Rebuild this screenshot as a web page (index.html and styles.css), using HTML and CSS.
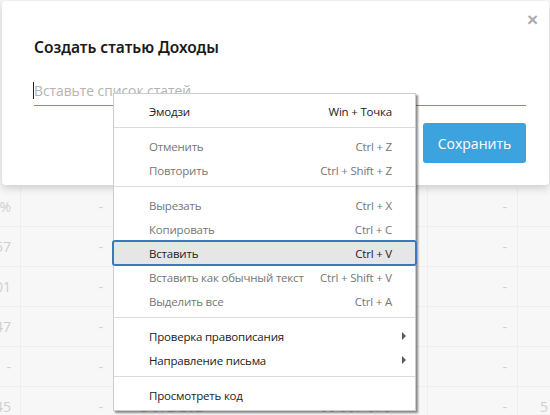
FILE: index.html
```html
<!DOCTYPE html>
<html lang="ru">
<head>
<meta charset="utf-8">
<title>Создать статью</title>
<link rel="stylesheet" href="styles.css">
</head>
<body>
<div class="page">
  <div class="table">
    <div class="row"><div class="c c1">%</div><div class="c c2">-</div><div class="c c3"></div><div class="c c4"></div><div class="c c5">-</div><div class="c c6"></div></div>
    <div class="row"><div class="c c1">57</div><div class="c c2">-</div><div class="c c3"></div><div class="c c4"></div><div class="c c5">-</div><div class="c c6"></div></div>
    <div class="row"><div class="c c1">01</div><div class="c c2">-</div><div class="c c3"></div><div class="c c4"></div><div class="c c5">-</div><div class="c c6"></div></div>
    <div class="row"><div class="c c1">47</div><div class="c c2">-</div><div class="c c3"></div><div class="c c4"></div><div class="c c5">-</div><div class="c c6"></div></div>
    <div class="row"><div class="c c1">-</div><div class="c c2">-</div><div class="c c3"></div><div class="c c4"></div><div class="c c5">-</div><div class="c c6"></div></div>
    <div class="row"><div class="c c1">45</div><div class="c c2">-</div><div class="c c3">0 072 202</div><div class="c c4">00 007 070</div><div class="c c5">-</div><div class="c c6">5</div></div>
  </div>
</div>

<div class="modal">
  <div class="close">×</div>
  <h2 class="title">Создать статью Доходы</h2>
  <div class="field"><span class="caret"></span><span class="placeholder">Вставьте список статей</span></div>
  <div class="actions"><button class="save">Сохранить</button></div>
</div>

<div class="menu">
  <div class="item on"><span>Эмодзи</span><span>Win + Точка</span></div>
  <div class="sep"></div>
  <div class="item"><span>Отменить</span><span>Ctrl + Z</span></div>
  <div class="item"><span>Повторить</span><span>Ctrl + Shift + Z</span></div>
  <div class="sep"></div>
  <div class="item"><span>Вырезать</span><span>Ctrl + X</span></div>
  <div class="item"><span>Копировать</span><span>Ctrl + C</span></div>
  <div class="item on active"><span>Вставить</span><span>Ctrl + V</span></div>
  <div class="item"><span>Вставить как обычный текст</span><span>Ctrl + Shift + V</span></div>
  <div class="item"><span>Выделить все</span><span>Ctrl + A</span></div>
  <div class="sep"></div>
  <div class="item on sub"><span>Проверка правописания</span><svg class="arrow" width="5" height="8" viewBox="0 0 5 8"><polygon points="0,0 4,4 0,8" fill="#5a5a5a"/></svg></div>
  <div class="item on sub"><span>Направление письма</span><svg class="arrow" width="5" height="8" viewBox="0 0 5 8"><polygon points="0,0 4,4 0,8" fill="#5a5a5a"/></svg></div>
  <div class="sep"></div>
  <div class="item on"><span>Просмотреть код</span></div>
</div>
</body>
</html>
```
FILE: styles.css
```css
* { box-sizing: border-box; }
html, body { margin: 0; padding: 0; }
body {
  width: 550px;
  height: 415px;
  overflow: hidden;
  position: relative;
  background: #f7f7f7;
  font-family: "Open Sans", "Noto Sans", sans-serif;
}
.page { padding-top: 187px; }
.table { display: flex; flex-direction: column; }
.row {
  display: flex;
  height: 40px;
  border-bottom: 1px solid #eeeeee;
  font-size: 14px;
  color: #cfcfcf;
}
.c {
  flex-shrink: 0;
  display: flex;
  align-items: center;
  justify-content: flex-end;
  padding-right: 10px;
  white-space: nowrap;
}
.c1 { width: 29px; margin-left: -8px; padding-right: 9px; border-right: 1px solid #eeeeee; }
.c2 { width: 92px; }
.c3 { width: 100px; color: #c8c8c8; }
.c4 { width: 214px; color: #c8c8c8; padding-right: 36px; }
.c5 { width: 91px; border-left: 1px solid #eeeeee; border-right: 1px solid #eeeeee; }
.c6 { width: 40px; }

.modal {
  position: absolute;
  left: 2px;
  top: 1px;
  width: 547px;
  height: 184px;
  background: #ffffff;
  border-radius: 4px;
  box-shadow: 0 3px 9px rgba(0, 0, 0, 0.18);
  padding: 36px 23px 0 32px;
  display: flex;
  flex-direction: column;
}
.close {
  position: absolute;
  top: 8px;
  right: 11px;
  font-family: "Liberation Sans", sans-serif;
  font-size: 19px;
  font-weight: bold;
  line-height: 22px;
  color: #acacac;
}
.title {
  margin: 0;
  font-family: "Noto Sans", sans-serif;
  font-weight: 600;
  font-size: 15.5px;
  line-height: 20px;
  color: #1a1a1a;
}
.field {
  margin-top: 18px;
  height: 31px;
  border-bottom: 1px solid #4a9fd6;
  display: flex;
  align-items: center;
}
.caret {
  width: 1px;
  height: 17px;
  background: #222;
  margin-left: -1px;
}
.placeholder {
  font-size: 13.8px;
  color: #b3b3b3;
}
.actions {
  margin-top: 17px;
  display: flex;
  justify-content: flex-end;
}
.save {
  width: 103px;
  height: 40px;
  border: none;
  border-radius: 3px;
  background: #3da3de;
  color: #ffffff;
  font-family: "Open Sans", sans-serif;
  font-size: 14px;
  padding: 0;
}

.menu {
  position: absolute;
  left: 113px;
  top: 93px;
  width: 303px;
  background: #ffffff;
  border: 1px solid #cccccc;
  box-shadow: 2px 2px 2px rgba(0, 0, 0, 0.45);
  padding: 5px 0 3px;
  font-size: 11.5px;
  letter-spacing: -0.2px;
  color: #767676;
  white-space: nowrap;
}
.item {
  height: 24px;
  display: flex;
  align-items: center;
  justify-content: space-between;
  padding: 0 23px 0 35px;
}
.item.on { color: #222222; }
.item.sub { padding-right: 8px; }
.item.active {
  height: 26px;
  margin: -1px -2px;
  padding-left: 37px;
  padding-right: 25px;
  background: #e6e6e6;
  box-shadow: inset 0 0 0 2px #3c78c2;
  border-radius: 3px;
}
.sep {
  height: 1px;
  background: #dcdcdc;
  margin: 4px 0 6px;
}
.arrow { display: block; }
```
